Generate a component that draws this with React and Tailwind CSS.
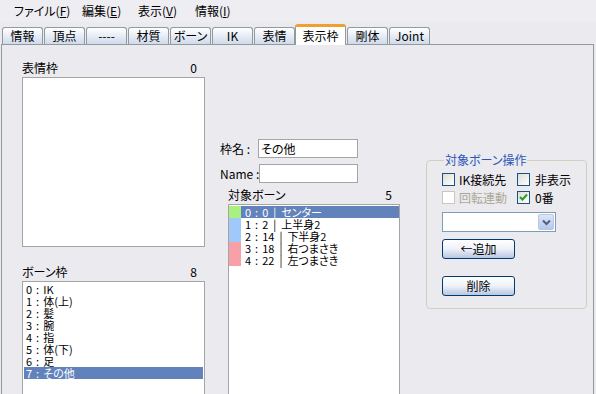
const menus = [
	{ label: "ファイル", key: "F", w: "w-[68px]" },
	{ label: "編集", key: "E", w: "w-[56px]" },
	{ label: "表示", key: "V", w: "w-[57px]" },
	{ label: "情報", key: "I", w: "w-[60px]" },
];

const tabs = ["情報", "頂点", "----", "材質", "ボーン", "IK", "表情", "表示枠", "剛体", "Joint"];

const frames = ["IK", "体(上)", "髪", "腕", "指", "体(下)", "足", "その他"];

const bones = [
	{ idx: 0, id: 0, name: "センター", color: "bg-[#a8f080]" },
	{ idx: 1, id: 2, name: "上半身2", color: "bg-[#a0c8f8]" },
	{ idx: 2, id: 14, name: "下半身2", color: "bg-[#a0c8f8]" },
	{ idx: 3, id: 18, name: "右つまさき", color: "bg-[#f8a0a8]" },
	{ idx: 4, id: 22, name: "左つまさき", color: "bg-[#f8a0a8]" },
];

function Tab({ label, active }) {
	if (active) {
		return (
			<div className="relative z-10 -mb-px ml-[-1px] mr-[1px] flex h-[21px] w-[51px] items-center justify-center rounded-t-[3px] border-x border-t-[3px] border-x-[#919b9c] border-t-[#f0a030] bg-white pb-[1px]">
				{label}
			</div>
		);
	}
	return (
		<div className="mr-[1px] flex h-[17px] w-[41px] items-center justify-center rounded-t-[3px] border border-b-0 border-[#919b9c] bg-linear-to-b from-white to-[#cfdaec]">
			{label}
		</div>
	);
}

function CheckBox({ checked, disabled }) {
	return (
		<span
			className={`flex h-[13px] w-[13px] shrink-0 items-center justify-center border ${
				disabled ? "border-[#cac8bb] bg-white" : "border-[#1c5180] bg-linear-to-br from-[#dcdcd7] to-white"
			}`}
		>
			{checked && (
				<svg width="9" height="9" viewBox="0 0 9 9">
					<path d="M1 4 L3.5 6.5 L8 1.5" stroke="#21a121" strokeWidth="2" fill="none" />
				</svg>
			)}
		</span>
	);
}

function Button({ children }) {
	return (
		<button className="flex h-[20px] w-[73px] items-center justify-center rounded-[3px] border border-[#003c74] bg-linear-to-b from-white via-[#eef1f8] to-[#b9c7e0] text-[12px] leading-none">
			{children}
		</button>
	);
}

export default function App() {
	return (
		<div
			className="h-[394px] w-[596px] overflow-hidden whitespace-nowrap bg-[#ebeaef] text-[12px] leading-none text-black [font-feature-settings:'palt']"
			style={{ fontFamily: '"Noto Sans CJK JP", sans-serif' }}
		>
			{/* menu */}
			<div className="flex h-[22px] items-center bg-[#eeedf2] pl-[14px]">
				{menus.map((m) => (
					<div key={m.key} className={m.w}>
						{m.label}(<u>{m.key}</u>)
					</div>
				))}
			</div>

			{/* tabs */}
			<div className="mt-[2px] flex h-[20px] items-end pl-[2px]">
				{tabs.map((t) => (
					<Tab key={t} label={t} active={t === "表示枠"} />
				))}
			</div>

			{/* panel */}
			<div className="ml-[1px] flex h-[360px] w-[593px] border border-b-0 border-[#919b9c] pl-[20px]">
				{/* left column */}
				<div className="flex w-[183px] flex-col pt-[17px]">
					<div className="flex h-[14px] justify-between pr-[8px]">
						<span>表情枠</span>
						<span>0</span>
					</div>
					<div className="mt-[1px] h-[170px] border border-[#a5a5a5] bg-white" />
					<div className="mt-[19px] flex h-[14px] justify-between pr-[8px]">
						<span>ボーン枠</span>
						<span>8</span>
					</div>
					<div className="mt-[1px] flex-1 border border-[#a5a5a5] bg-white pt-[1px] text-[11px]">
						{frames.map((f, i) => (
							<div
								key={f}
								className={`mx-[1px] flex h-[12px] items-center pl-[2px] leading-[12px] ${
									i === 7 ? "bg-[#6182bb] text-white" : ""
								}`}
							>
								<span>{i}</span>
								<span className="px-[4px]">:</span>
								<span>{f}</span>
							</div>
						))}
					</div>
				</div>

				{/* middle column */}
				<div className="ml-[15px] flex w-[180px] flex-col pt-[94px]">
					<div className="flex h-[19px] items-center">
						<span className="w-[38px]">枠名 :</span>
						<div className="flex h-[19px] w-[100px] items-center border border-[#a5a5a5] bg-white pl-[2px]">その他</div>
					</div>
					<div className="mt-[6px] flex h-[19px] items-center">
						<span className="w-[39px]">Name :</span>
						<div className="h-[19px] w-[99px] border border-[#a5a5a5] bg-white" />
					</div>
					<div className="ml-[8px] mt-[6px] flex h-[14px] justify-between pr-[8px]">
						<span>対象ボーン</span>
						<span>5</span>
					</div>
					<div className="ml-[8px] mt-[1px] w-[172px] flex-1 border border-[#a5a5a5] bg-white pt-[1px] text-[11px]">
						{bones.map((b, i) => (
							<div
								key={b.idx}
								className={`flex h-[12px] items-center leading-[12px] ${
									i === 0 ? "bg-[#6182bb] text-white" : ""
								}`}
							>
								<span className={`h-[12px] w-[12px] shrink-0 ${b.color}`} />
								<span className="pl-[4px]">{b.idx}</span>
								<span className="px-[4px]">:</span>
								<span>{b.id}</span>
								<span className="px-[5px]">|</span>
								<span>{b.name}</span>
							</div>
						))}
					</div>
				</div>

				{/* right column */}
				<div className="ml-[26px] w-[158px] pt-[109px]">
					<fieldset className="h-[155px] rounded-[4px] border border-[#d0d0bf] px-[15px]">
						<legend className="ml-[2px] px-[1px] text-[#2856b8]">対象ボーン操作</legend>
						<div className="mt-[7px] grid grid-cols-[75px_1fr] gap-y-[5px]">
							<label className="flex items-center gap-[4px]">
								<CheckBox />
								IK接続先
							</label>
							<label className="flex items-center gap-[5px]">
								<CheckBox />
								非表示
							</label>
							<label className="flex items-center gap-[4px] text-[#aca899]">
								<CheckBox disabled />
								回転連動
							</label>
							<label className="flex items-center gap-[5px]">
								<CheckBox checked />
								0番
							</label>
						</div>
						<div className="mt-[8px] flex h-[20px] w-[114px] border border-[#7f9db9] bg-white">
							<div className="flex-1" />
							<div className="m-[1px] flex w-[16px] items-center justify-center rounded-[2px] border border-[#b9c7e0] bg-linear-to-b from-[#dde6f6] to-[#b7c8ea]">
								<svg width="9" height="7" viewBox="0 0 9 7">
									<path d="M1 1.5 L4.5 5 L8 1.5" stroke="#4d6185" strokeWidth="2" fill="none" />
								</svg>
							</div>
						</div>
						<div className="mt-[7px]">
							<Button>←追加</Button>
						</div>
						<div className="mt-[17px]">
							<Button>削除</Button>
						</div>
					</fieldset>
				</div>
			</div>
		</div>
	);
}
